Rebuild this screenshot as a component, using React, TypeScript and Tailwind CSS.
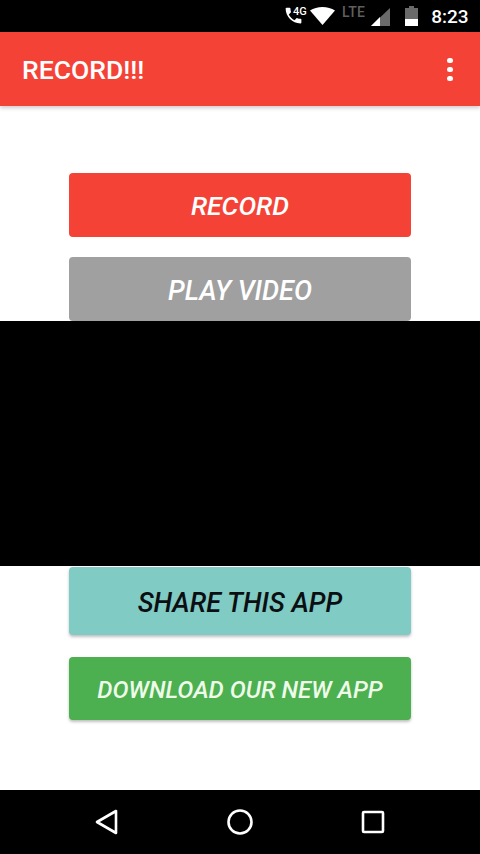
import React from 'react';

const StatusBar = () => (
  <div className="h-8 bg-black flex items-center pl-[286px] text-white shrink-0">
    <div className="relative w-[20px] h-[26px] mt-[2px]">
      <svg viewBox="0 0 24 24" className="absolute left-[-3px] top-[1px] w-[21px] h-[21px]" fill="#fff">
        <path d="M6.6 10.8c1.4 2.8 3.8 5.100 6.600 6.600l2.200-2.200c.3-.3.700-.4 1-.2 1.100.4 2.300.6 3.600.6.600 0 1 .4 1 1V20c0 .6-.4 1-1 1C10.600 21 3 13.400 3 4c0-.6.400-1 1-1h3.500c.6 0 1 .4 1 1 0 1.300.2 2.500.6 3.600.1.300 0 .7-.2 1z" />
      </svg>
      <span className="absolute left-[7px] top-[2px] text-[11px] leading-[12px] font-['Roboto',sans-serif] font-medium">4G</span>
    </div>
    <svg viewBox="0 0 25 18" className="w-[25px] h-[18px] ml-[4px]" fill="#fff">
      <path d="M12.500 18 0 3.500C3.500 1.200 7.800 0 12.500 0S21.500 1.200 25 3.500z" />
    </svg>
    <span className="ml-[7px] mb-[9px] text-[14px] leading-[14px] font-medium tracking-[0.3px] text-[#5f5f5f] font-['Roboto',sans-serif]">LTE</span>
    <svg viewBox="0 0 19 18" className="w-[19px] h-[18px] ml-[6px] mt-[2px]">
      <path d="M19 0v18H0z" fill="#6a6a6a" />
      <path d="M9 9v9H0z" fill="#fff" />
    </svg>
    <div className="w-[13px] h-[20px] ml-[15px] flex flex-col items-center">
      <div className="w-[5px] h-[2px] bg-[#6a6a6a]" />
      <div className="w-[13px] h-[11px] bg-[#6a6a6a]" />
      <div className="w-[13px] h-[7px] bg-white" />
    </div>
    <span className="ml-[13px] pt-[2px] text-[19px] leading-5 font-medium font-['Roboto',sans-serif]">8:23</span>
  </div>
);

const AppBar = () => (
  <div className="h-[74px] bg-[#f44336] flex items-center justify-between pl-[22px] pr-[27px] shrink-0 shadow-[0_2px_4px_rgba(0,0,0,0.2)] relative">
    <span className="pt-[2px] text-[26.500px] font-medium text-white font-['Roboto',sans-serif]">RECORD!!!</span>
    <div className="flex flex-col gap-[4px]">
      <div className="w-[6px] h-[5px] rounded-full bg-white" />
      <div className="w-[6px] h-[5px] rounded-full bg-white" />
      <div className="w-[6px] h-[5px] rounded-full bg-white" />
    </div>
  </div>
);

const btn = "mx-[69px] flex items-center justify-center rounded-[4px] italic font-medium font-['Roboto',sans-serif]";

const NavBar = () => (
  <div className="h-16 bg-black flex items-center justify-between pl-[95px] pr-[95px] shrink-0">
    <svg viewBox="0 0 24 26" className="w-[24px] h-[26px]" fill="none" stroke="#fff" strokeWidth="2.600" strokeLinejoin="round">
      <path d="M21 2v22L2 13z" />
    </svg>
    <svg viewBox="0 0 26 26" className="w-[26px] h-[26px]" fill="none" stroke="#fff" strokeWidth="2.600">
      <circle cx="13" cy="13" r="11.500" />
    </svg>
    <svg viewBox="0 0 24 24" className="w-[24px] h-[24px]" fill="none" stroke="#fff" strokeWidth="2.600" strokeLinejoin="round">
      <rect x="2" y="2" width="20" height="20" rx="1" />
    </svg>
  </div>
);

export default function App() {
  return (
    <div className="w-[480px] h-[854px] flex flex-col bg-white overflow-hidden">
      <StatusBar />
      <AppBar />
      <div className="flex-1 flex flex-col pt-[67px]">
        <div className={`${btn} pt-[2px] h-16 bg-[#f44336] text-white text-[26.500px]`}>RECORD</div>
        <div className={`${btn} pt-[4px] h-16 mt-5 bg-[#a0a0a0] text-white text-[27px]`}>PLAY VIDEO</div>
        <div className="h-[245px] bg-black" />
        <div className={`${btn} pt-[4px] h-[68px] mt-px bg-[#80cbc4] text-[#0b0f12] text-[27px] shadow-[0_2px_3px_rgba(0,0,0,0.25)]`}>SHARE THIS APP</div>
        <div className={`${btn} pt-[2px] h-[63px] mt-[22px] bg-[#4caf50] text-[#eefbe9] text-[24px] shadow-[0_2px_3px_rgba(0,0,0,0.25)]`}>DOWNLOAD OUR NEW APP</div>
      </div>
      <NavBar />
    </div>
  );
}
